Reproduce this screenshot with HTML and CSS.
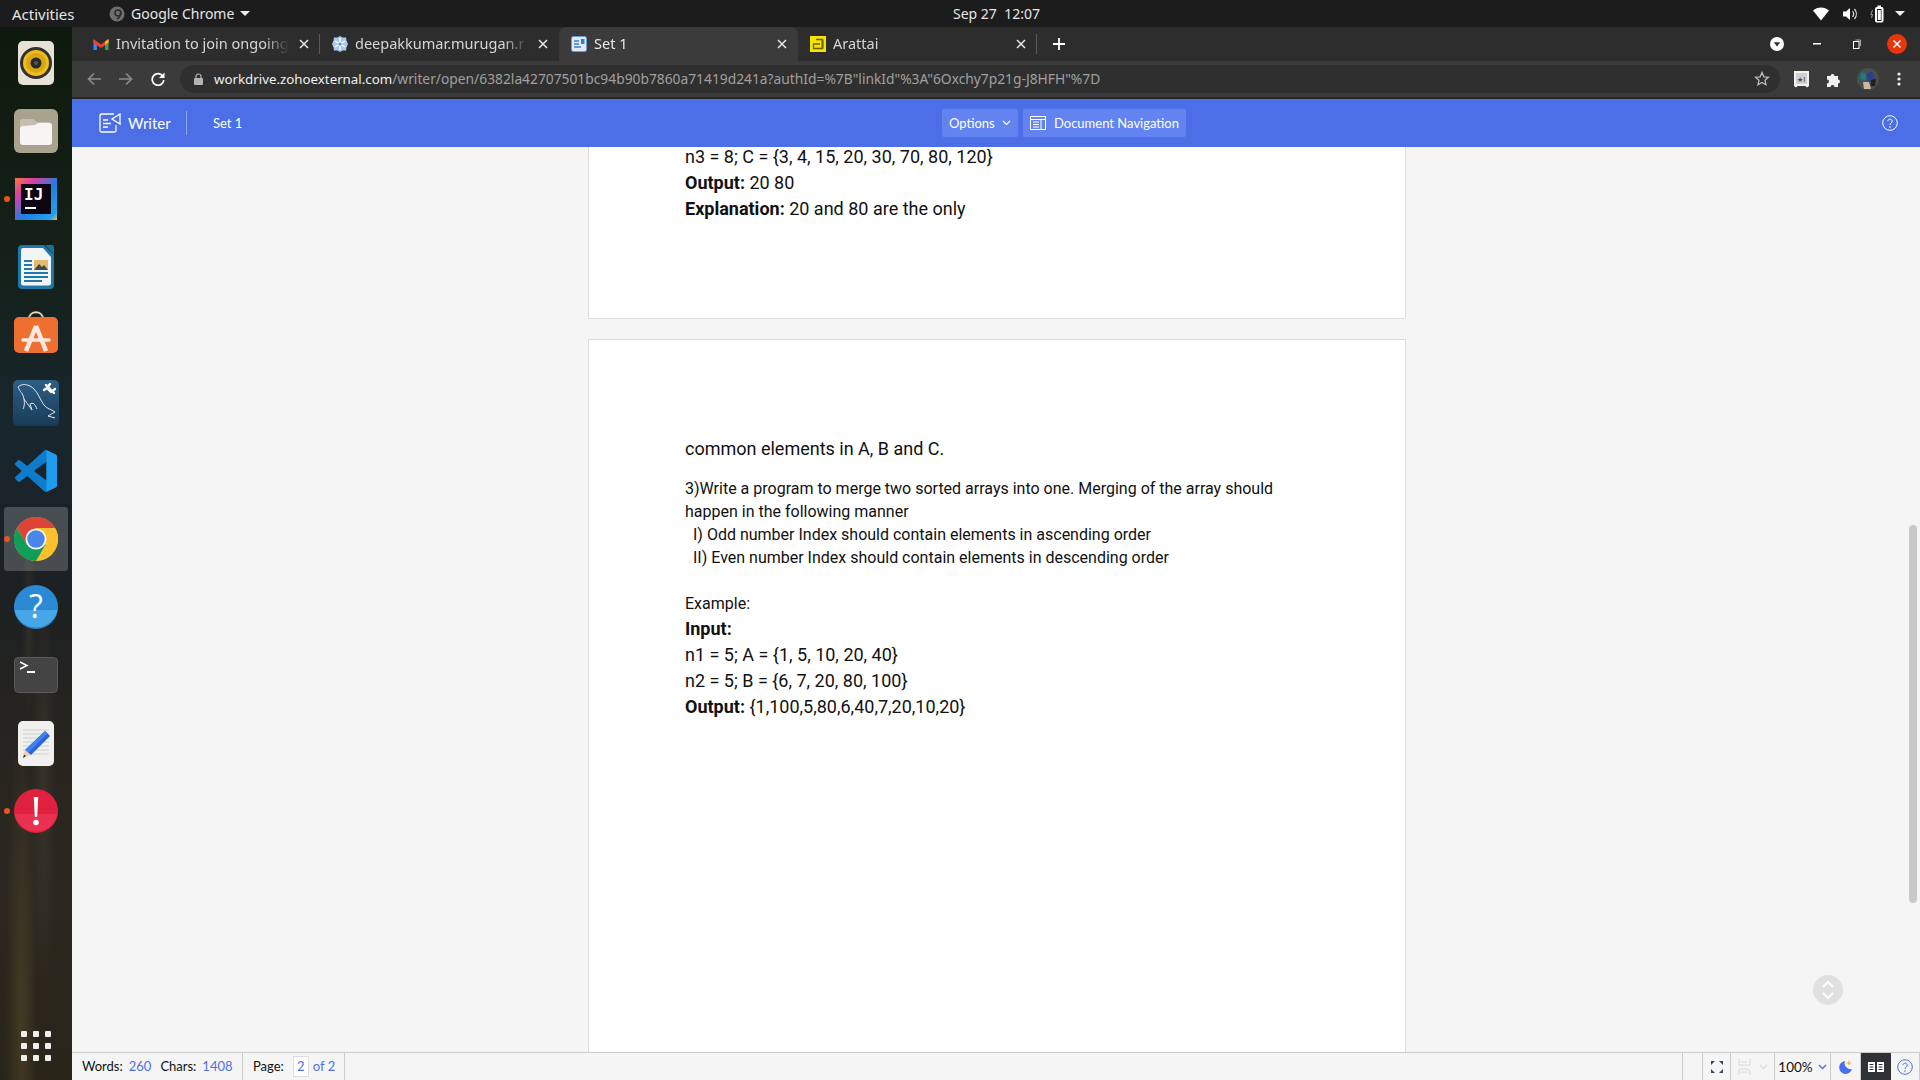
FILE: index.html
```html
<!DOCTYPE html>
<html lang="en">
  <head>
    <meta charset="UTF-8" />
    <title>Set 1</title>
    <link rel="stylesheet" href="styles.css">
  </head>
  <body>
    <!-- Desktop top bar -->
    <div class="topbar">
      <div class="topbar-left">
        <span class="activities">Activities</span>
        <svg class="app-dot" width="16" height="16" viewBox="0 0 16 16"><circle cx="8" cy="8" r="7.5" fill="#6f6f6f"/><circle cx="9" cy="7" r="3" fill="none" stroke="#2a2a2a" stroke-width="1.6"/><path d="M11.5 7c0 3-1.500 5-3.500 6" fill="none" stroke="#2a2a2a" stroke-width="1.600"/></svg>
        <span class="app-name">Google Chrome</span>
        <span class="caret"></span>
      </div>
      <span class="clock">Sep 27&nbsp; 12:07</span>
      <div class="topbar-right">
        <svg width="18" height="14" viewBox="0 0 18 14"><path d="M1 3.500C5.500-.5 12.500-.5 17 3.500L9 13.500z" fill="#fff"/></svg>
        <svg width="16" height="14" viewBox="0 0 16 14"><path d="M1 4.500h3L8 1v12L4 9.500H1z" fill="#fff"/><path d="M10.500 4c1.300 1.700 1.300 4.300 0 6M12.500 2c2.400 2.900 2.400 7.100 0 10" fill="none" stroke="#ddd" stroke-width="1.200"/></svg>
        <svg width="14" height="18" viewBox="0 0 14 18"><path d="M2.500 5 0.800 9.500H2.500L1.500 13" fill="none" stroke="#999" stroke-width="1"/><rect x="5.500" y="2.500" width="7.500" height="14.500" rx="1" fill="#fff" stroke="#fff"/><rect x="7" y="4" width="4.500" height="12" fill="#1c1c1c"/><rect x="7.800" y="5" width="3" height="10" fill="#fff"/><rect x="7.500" y="0.500" width="3.500" height="2" fill="#fff"/></svg>
        <span class="caret caret-last"></span>
      </div>
    </div>

    <div class="desktop">
      <!-- Dock -->
      <div class="dock">
        <div class="dock-item">
          <svg width="36" height="44" viewBox="0 0 36 44"><rect width="36" height="44" rx="5" fill="#e6e2d6"/><circle cx="18" cy="22" r="16" fill="#33322f"/><circle cx="18" cy="22" r="13" fill="#eebd20"/><circle cx="18" cy="22" r="10" fill="#d9a511"/><circle cx="18" cy="22" r="5.500" fill="#2a2a2a"/><circle cx="18" cy="22" r="2" fill="#555"/></svg>
        </div>
        <div class="dock-item">
          <svg width="44" height="44" viewBox="0 0 44 44"><rect width="44" height="44" rx="6" fill="#a9a28f"/><path d="M6 13a3 3 0 0 1 3-3h10l4 3h12a3 3 0 0 1 3 3v17a3 3 0 0 1-3 3H9a3 3 0 0 1-3-3z" fill="#c4bfae"/><path d="M6 19a3 3 0 0 1 3-2l12-1 3-2h11a3 3 0 0 1 3 3v17a3 3 0 0 1-3 2H9a3 3 0 0 1-3-2z" fill="#f6f5f3"/></svg>
        </div>
        <div class="dock-item">
          <span class="running-dot"></span>
          <svg width="42" height="42" viewBox="0 0 42 42"><defs><linearGradient id="ij" x1="0" y1="0" x2="1" y2="1"><stop offset="0" stop-color="#f5793a"/><stop offset="0.250" stop-color="#d93ea6"/><stop offset="0.550" stop-color="#1f7fe0"/><stop offset="0.900" stop-color="#1fa3f0"/><stop offset="1" stop-color="#f2c14a"/></linearGradient></defs><rect width="42" height="42" fill="url(#ij)"/><rect x="6" y="6" width="30" height="30" fill="#0c0612"/><text x="9" y="22" class="ij-text">IJ</text><rect x="10" y="29" width="11" height="2" fill="#fff"/></svg>
        </div>
        <div class="dock-item">
          <svg width="36" height="44" viewBox="0 0 36 44"><path d="M4 0h22l10 10v30a4 4 0 0 1-4 4H4a4 4 0 0 1-4-4V4a4 4 0 0 1 4-4z" fill="#1f78a8"/><path d="M5 3h20l8 9v26a2.500 2.500 0 0 1-2.500 2.500h-25A2.500 2.500 0 0 1 3 38V5a2 2 0 0 1 2-2z" fill="#f1f5f7"/><path d="M27 0h7a2 2 0 0 1 2 2v8z" fill="#1f6d99"/><rect x="6" y="15" width="8" height="2" fill="#1f78a8"/><rect x="6" y="19" width="8" height="2" fill="#1f78a8"/><rect x="6" y="23" width="8" height="2" fill="#1f78a8"/><rect x="16" y="15" width="14" height="10" fill="#e4b96a"/><path d="M16 25l5-6 3 3 2-2 4 5z" fill="#3f4a55"/><rect x="6" y="27" width="24" height="2" fill="#1f78a8"/><rect x="6" y="31" width="24" height="2" fill="#1f78a8"/><rect x="6" y="35" width="18" height="2" fill="#1f78a8"/></svg>
        </div>
        <div class="dock-item">
          <svg class="store-icon" width="44" height="44" viewBox="0 0 44 44"><path d="M15 9c0-9 14-9 14 0" fill="none" stroke="#e8d9b0" stroke-width="1.800"/><rect y="7" width="44" height="36" rx="5" fill="#ee7030"/><path d="M22 16 12 41M22 16l10 25" fill="none" stroke="#fbe9df" stroke-width="4.500" stroke-linejoin="round"/><path d="M9 30h26" stroke="#fbe9df" stroke-width="3.500" stroke-linecap="round"/></svg>
        </div>
        <div class="dock-item">
          <svg width="46" height="46" viewBox="0 0 46 46"><defs><linearGradient id="my" x1="0" y1="0" x2="0" y2="1"><stop offset="0" stop-color="#2f5f86"/><stop offset="1" stop-color="#183b57"/></linearGradient></defs><rect width="46" height="46" rx="5" fill="url(#my)"/><path d="M5 7C9 3 16 4 21 9c5 5 6 11 10 16 3 4 7 4 11 7l-7 4 7 2M5 7c2 5 5 6 6 12 1 5 0 8-1 10M11 19l8 11-2-6c3-2 5 0 7 5" fill="none" stroke="#dfe7ee" stroke-width="1"/><path d="M33 5l8 8M37 4l-3 4 4 4 4-3M34 8l-3 2" fill="none" stroke="#fff" stroke-width="2.400" stroke-linecap="round"/></svg>
        </div>
        <div class="dock-item">
          <svg width="42" height="42" viewBox="0 0 24 24"><path d="M23.150 2.587L18.210.21a1.494 1.494 0 0 0-1.705.29l-9.460 8.630-4.120-3.128a.999.999 0 0 0-1.276.057L.327 7.261A1 1 0 0 0 .326 8.740L3.899 12 .326 15.260a1 1 0 0 0 .001 1.479L1.650 17.940a.999.999 0 0 0 1.276.057l4.120-3.128 9.460 8.630a1.492 1.492 0 0 0 1.704.29l4.942-2.377A1.500 1.500 0 0 0 24 20.060V3.939a1.500 1.500 0 0 0-.850-1.352zm-5.146 14.861L10.826 12l7.178-5.448v10.896z" fill="#0f7ccb"/><path d="M18 0.100l5.150 2.487A1.500 1.500 0 0 1 24 3.939V20.060a1.500 1.500 0 0 1-.850 1.352L18 23.900z" fill="#1f9cf0"/></svg>
        </div>
        <div class="dock-item dock-item-active">
          <span class="running-dot"></span>
          <svg width="44" height="44" viewBox="0 0 48 48"><circle cx="24" cy="24" r="24" fill="#fbc02d"/><path id="chrome-red" d="M44.800 12A24 24 0 0 0 3.200 12L13.600 30 24 12z" fill="#db4437"/><path d="M44.800 12A24 24 0 0 1 24 48L34.400 30 24 12z" fill="#fbc02d"/><path d="M3.200 12A24 24 0 0 0 24 48L34.400 30H13.600z" fill="#0f9d58"/><circle cx="24" cy="24" r="11.500" fill="#f3f3f3"/><circle cx="24" cy="24" r="9.500" fill="#4a86e8"/></svg>
        </div>
        <div class="dock-item">
          <svg width="44" height="44" viewBox="0 0 44 44"><circle cx="22" cy="22" r="22" fill="#2b8ad6"/><path d="M0.500 25h43A22 22 0 0 1 .5 25z" fill="#48a5e6"/><text x="22" y="33" class="help-text">?</text></svg>
        </div>
        <div class="dock-item">
          <svg width="44" height="36" viewBox="0 0 44 36"><rect x="0.500" y="0.500" width="43" height="35" rx="4" fill="#444" stroke="#5c5c5c"/><path d="M6 5l7 3.500-7 3.500" fill="none" stroke="#fff" stroke-width="1.500"/><rect x="13" y="14" width="8" height="2" fill="#fff"/></svg>
        </div>
        <div class="dock-item">
          <svg width="36" height="45" viewBox="0 0 36 45"><rect width="36" height="45" rx="5" fill="#f0f0ef"/><path d="M5 9h26M5 13h26M5 17h26M5 21h26M5 25h26M5 29h26M5 33h26" stroke="#cfcfcf" stroke-width="1"/><path d="M27 10l5 5-19 19-6-5z" fill="#2a62d8"/><path d="M27 10l2.500 2.500L10 32l-3-3z" fill="#3f82ee"/><path d="M7 29l6 5-8 3z" fill="#efcfa6"/><path d="M6 33.500l2 1.500-3 2z" fill="#333"/></svg>
        </div>
        <div class="dock-item">
          <span class="running-dot"></span>
          <svg width="44" height="44" viewBox="0 0 44 44"><circle cx="22" cy="22" r="22" fill="#e0203f"/><path d="M0.500 25h43A22 22 0 0 1 .5 25z" fill="#ea3152"/><path d="M19.800 8h4.400l-1 20h-2.400z" fill="#fff"/><circle cx="22" cy="33.500" r="2.800" fill="#fff"/></svg>
        </div>
        <div class="apps-grid">
          <span></span><span></span><span></span>
          <span></span><span></span><span></span>
          <span></span><span></span><span></span>
        </div>
      </div>

      <!-- Browser window -->
      <div class="window">
        <div class="tabstrip">
          <div class="tab tab-sep">
            <svg class="favicon" width="15" height="12" viewBox="0 0 15 12"><path d="M0 1.500V12h3.400V4.500z" fill="#4285f4"/><path d="M15 1.500V12h-3.400V4.500z" fill="#34a853"/><path d="M0 1l7.500 5.500L15 1v4L7.500 10 0 5z" fill="#ea4335"/><path d="M11.600 3.500L15 1v3.500l-3.400 2.500z" fill="#fbbc04"/></svg>
            <span class="tab-title">Invitation to join ongoing</span>
            <svg class="tab-close" width="10" height="10" viewBox="0 0 10 10"><path d="M1 1l8 8M9 1L1 9" stroke="#e8e8e8" stroke-width="1.500"/></svg>
          </div>
          <div class="tab">
            <svg class="favicon" width="16" height="16" viewBox="0 0 16 16"><path d="M8 0l2.500 1.500H14l.5 3L16 8l-1.500 3.500-.5 3h-3.500L8 16l-2.500-1.500H2l-.5-3L0 8l1.500-3.500L2 1.500h3.500z" fill="#a9c8ee"/><path d="M8 2v12M3 5l10 6M13 5L3 11" stroke="#fff" stroke-width="1.300"/><circle cx="8" cy="8" r="1.600" fill="#5a93d8"/></svg>
            <span class="tab-title">deepakkumar.murugan.r</span>
            <svg class="tab-close" width="10" height="10" viewBox="0 0 10 10"><path d="M1 1l8 8M9 1L1 9" stroke="#e8e8e8" stroke-width="1.500"/></svg>
          </div>
          <div class="tab tab-active">
            <svg class="favicon" width="16" height="16" viewBox="0 0 16 16"><rect x="0.500" y="0.500" width="15" height="15" rx="2" fill="#dfe9f7" stroke="#6b9ed8"/><path d="M3 5h5M3 8h5M3 11h7" stroke="#3f7cc8" stroke-width="1.400"/><path d="M10 3h3.500v5H10z" fill="#3f7cc8"/></svg>
            <span class="tab-title">Set 1</span>
            <svg class="tab-close" width="10" height="10" viewBox="0 0 10 10"><path d="M1 1l8 8M9 1L1 9" stroke="#e8e8e8" stroke-width="1.500"/></svg>
          </div>
          <div class="tab tab-sep">
            <svg class="favicon" width="16" height="16" viewBox="0 0 16 16"><rect width="16" height="16" fill="#f5e300"/><path d="M6 3.500h6.500v9H3.500V8H10" fill="none" stroke="#6b6500" stroke-width="1.300"/><path d="M12.500 3.500v9" stroke="#6b6500" stroke-width="2"/></svg>
            <span class="tab-title">Arattai</span>
            <svg class="tab-close" width="10" height="10" viewBox="0 0 10 10"><path d="M1 1l8 8M9 1L1 9" stroke="#e8e8e8" stroke-width="1.500"/></svg>
          </div>
          <svg class="new-tab" width="14" height="14" viewBox="0 0 14 14"><path d="M7 1v12M1 7h12" stroke="#fff" stroke-width="1.800"/></svg>
          <div class="window-controls">
            <svg class="tab-search" width="14" height="14" viewBox="0 0 14 14"><circle cx="7" cy="7" r="7" fill="#fff"/><path d="M3.800 5.200h6.400L7 9.600z" fill="#2d2d2d"/></svg>
            <svg class="win-min" width="8" height="2" viewBox="0 0 8 2"><rect width="8" height="1.500" fill="#fff"/></svg>
            <svg class="win-max" width="8" height="10" viewBox="0 0 8 10"><rect x="0.500" y="2.500" width="5.500" height="7" fill="none" stroke="#fff"/><path d="M2.500 1h5v6" fill="none" stroke="#aaa"/></svg>
            <svg class="win-close" width="20" height="20" viewBox="0 0 20 20"><circle cx="10" cy="10" r="10" fill="#e8350d"/><path d="M6.500 6.500l7 7M13.500 6.500l-7 7" stroke="#fff" stroke-width="1.500"/></svg>
          </div>
        </div>

        <div class="toolbar">
          <svg class="nav-btn" width="14" height="14" viewBox="0 0 14 14"><path d="M14 7H2M7 1.500 1.500 7 7 12.500" fill="none" stroke="#8a8a8a" stroke-width="1.700"/></svg>
          <svg class="nav-btn" width="14" height="14" viewBox="0 0 14 14"><path d="M0 7h12M7 1.500 12.500 7 7 12.500" fill="none" stroke="#8a8a8a" stroke-width="1.700"/></svg>
          <svg class="nav-btn" width="14" height="14" viewBox="0 0 14 14"><path d="M12 4.500A5.800 5.800 0 1 0 12.800 8" fill="none" stroke="#fff" stroke-width="1.700"/><path d="M13.500 0.500v5.500H8z" fill="#fff"/></svg>
          <div class="omnibox">
            <svg width="9" height="12" viewBox="0 0 9 12"><path d="M2 5V3.500a2.500 2.500 0 0 1 5 0V5" fill="none" stroke="#b5b5b5" stroke-width="1.200"/><rect y="5" width="9" height="7" rx="1" fill="#b5b5b5"/></svg>
            <span class="url"><span class="url-host">workdrive.zohoexternal.com</span>/writer/open/6382la42707501bc94b90b7860a71419d241a?authId=%7B"linkId"%3A"6Oxchy7p21g-J8HFH"%7D</span>
            <svg class="star" width="16" height="16" viewBox="0 0 16 16"><path d="M8 1.500l1.900 4.300 4.600.4-3.500 3 1 4.500L8 11.400l-4 2.300 1-4.500-3.500-3 4.600-.4z" fill="none" stroke="#bdbdbd" stroke-width="1.300"/></svg>
          </div>
          <div class="toolbar-icons">
            <svg width="17" height="18" viewBox="0 0 17 18"><path d="M1 1h15v15l-2 1.500-1.500-1.500h-8L3 17.500 1 16z" fill="#f1f1f1"/><rect x="3" y="3" width="11" height="11" fill="#cfcfcf"/><text x="4" y="12" class="ext-text">★I</text></svg>
            <svg class="ext-puzzle" width="16" height="16" viewBox="0 0 16 16"><path d="M1 5h3.500a2 2 0 1 1 4 0H12v3.500a2 2 0 1 1 0 4V16H8.500a2 2 0 1 0-4 0H1v-3.500a2 2 0 1 0 0-4z" fill="#f1f1f1"/></svg>
            <svg width="22" height="22" viewBox="0 0 22 22"><circle cx="11" cy="11" r="11" fill="#47504f"/><path d="M4 4l6 2-2 7-5-2z" fill="#1b7c79"/><path d="M9 6l6-3 3 8-6 3z" fill="#2b3f86"/><path d="M6 14l6 0 2 7-7 0z" fill="#c9b8a2"/><path d="M14 12l5-1-1 7-4 0z" fill="#231c20"/></svg>
            <svg class="menu-dots" width="4" height="14" viewBox="0 0 4 14"><circle cx="2" cy="2" r="1.600" fill="#f1f1f1"/><circle cx="2" cy="7" r="1.600" fill="#f1f1f1"/><circle cx="2" cy="12" r="1.600" fill="#f1f1f1"/></svg>
          </div>
        </div>

        <!-- Writer app header -->
        <div class="app-header">
          <div class="brand">
            <svg width="22" height="20" viewBox="0 0 22 20"><path d="M15 1H2.500A1.500 1.500 0 0 0 1 2.500v15A1.500 1.500 0 0 0 2.500 19h13a1.500 1.500 0 0 0 1.500-1.500V12M4 7h5M4 10.500h8M4 14h5" fill="none" stroke="#fff" stroke-width="1.300"/><path d="M21 1v10l-8-5z" fill="none" stroke="#fff" stroke-width="1.300"/></svg>
            <span class="brand-name">Writer</span>
          </div>
          <span class="doc-name">Set 1</span>
          <div class="header-tools">
            <button class="head-btn head-options">Options
              <svg width="9" height="6" viewBox="0 0 9 6"><path d="M1 1l3.500 3.500L8 1" fill="none" stroke="#fff" stroke-width="1.200"/></svg>
            </button>
            <button class="head-btn head-nav">
              <svg width="16" height="14" viewBox="0 0 16 14"><rect x="0.500" y="0.500" width="15" height="13" fill="none" stroke="#fff"/><path d="M0.500 3.500h15M11 3.500v10M3 6h6M3 8.500h6M3 11h6" fill="none" stroke="#fff"/></svg>
              Document Navigation
            </button>
          </div>
          <svg class="head-help" width="16" height="16" viewBox="0 0 16 16"><circle cx="8" cy="8" r="7.300" fill="none" stroke="#fff"/><path d="M5.800 6.200C6 3.600 10 3.600 10.200 6c.1 1.900-2.200 1.900-2.200 4" fill="none" stroke="#fff"/><circle cx="8" cy="12" r=".8" fill="#fff"/></svg>
        </div>

        <!-- Document -->
        <div class="doc-area">
          <div class="page page-first">
            <p class="line-lg">n3 = 8; C = {3, 4, 15, 20, 30, 70, 80, 120}</p>
            <p class="line-lg"><b>Output:</b> 20 80</p>
            <p class="line-lg"><b>Explanation:</b> 20 and 80 are the only</p>
          </div>
          <div class="page page-second">
            <p class="line-lg">common elements in A, B and C.</p>
            <p class="line-sm line-gap">3)Write a program to merge two sorted arrays into one. Merging of the array should</p>
            <p class="line-sm">happen in the following manner</p>
            <p class="line-sm indent">I) Odd number Index should contain elements in ascending order</p>
            <p class="line-sm indent">II) Even number Index should contain elements in descending order</p>
            <p class="line-sm">&nbsp;</p>
            <p class="line-sm example">Example:</p>
            <p class="line-lg"><b>Input:</b></p>
            <p class="line-lg">n1 = 5; A = {1, 5, 10, 20, 40}</p>
            <p class="line-lg">n2 = 5; B = {6, 7, 20, 80, 100}</p>
            <p class="line-lg"><b>Output:</b> {1,100,5,80,6,40,7,20,10,20}</p>
          </div>
          <div class="scrollbar"></div>
          <div class="scroll-jump">
            <svg width="14" height="20" viewBox="0 0 14 20"><path d="M2 7l5-5 5 5M2 13l5 5 5-5" fill="none" stroke="#fff" stroke-width="2"/></svg>
          </div>
        </div>

        <!-- Status bar -->
        <div class="statusbar">
          <div class="status-cell status-counts">
            <span>Words:</span><span class="num">260</span>
            <span class="chars">Chars:</span><span class="num">1408</span>
          </div>
          <div class="status-cell status-page">
            <span>Page:</span><span class="page-input">2</span><span class="num">of 2</span>
          </div>
          <div class="status-right">
            <div class="status-cell cell-blank"></div>
            <div class="status-cell cell-icon cell-full">
              <svg width="12" height="12" viewBox="0 0 12 12"><path d="M0 0h4L0 4zM12 0v4L8 0zM0 12V8l4 4zM12 12H8l4-4z" fill="#33465c"/></svg>
            </div>
            <div class="status-cell cell-icon cell-layout">
              <svg width="13" height="16" viewBox="0 0 13 16"><path d="M1 0v6h11V0M1 16v-6h8l3 2v4M3 3h6M3 13h6" fill="none" stroke="#d4d9dd"/></svg>
              <svg width="9" height="6" viewBox="0 0 9 6"><path d="M1 1l3.500 3.500L8 1" fill="none" stroke="#dcdcdc" stroke-width="1.300"/></svg>
            </div>
            <div class="status-cell cell-icon cell-zoom">
              <span>100%</span>
              <svg width="9" height="6" viewBox="0 0 9 6"><path d="M1 1l3.500 3.500L8 1" fill="none" stroke="#4c6fe8" stroke-width="1.400"/></svg>
            </div>
            <div class="status-cell cell-icon cell-moon">
              <svg width="14" height="14" viewBox="0 0 14 14"><path d="M6 1A6.500 6.500 0 1 0 13 9 6 6 0 0 1 6 1z" fill="#4c6fe8"/><path d="M10 0l.8 2.200L13 3l-2.200.8L10 6l-.8-2.200L7 3l2.200-.8z" fill="#f4b63d"/></svg>
            </div>
            <div class="status-cell cell-icon cell-read">
              <svg width="16" height="12" viewBox="0 0 16 12"><path d="M0 1h7v10H0zM9 1h7v10H9z" fill="#fff"/><path d="M1.500 3.500h4M1.500 6h4M1.500 8.500h4M10.500 3.500h4M10.500 6h4M10.500 8.500h4" stroke="#2f3336"/></svg>
            </div>
            <div class="status-cell cell-icon cell-help">
              <svg width="16" height="16" viewBox="0 0 16 16"><circle cx="8" cy="8" r="7.300" fill="none" stroke="#4c6fe8"/><path d="M5.800 6.200C6 3.600 10 3.600 10.200 6c.1 1.900-2.200 1.900-2.200 4" fill="none" stroke="#4c6fe8"/><circle cx="8" cy="12" r=".8" fill="#4c6fe8"/></svg>
            </div>
          </div>
        </div>
      </div>
    </div>
  </body>
</html>
```

FILE: styles.css
```css
* {
  box-sizing: border-box;
}
html,
body {
  margin: 0;
  padding: 0;
  height: 100%;
  overflow: hidden;
}
body {
  display: flex;
  flex-direction: column;
  width: 1920px;
  height: 1080px;
  font-family: "Noto Sans", sans-serif;
  background-color: #1c1c1c;
}
svg {
  display: block;
  flex-shrink: 0;
}

/* Top bar */
.topbar {
  display: flex;
  align-items: center;
  height: 27px;
  background-color: #1c1c1c;
  color: #e6e6e6;
  font-size: 14px;
  flex-shrink: 0;
}
.topbar-left {
  display: flex;
  align-items: center;
  width: 953px;
  padding-left: 12px;
}
.activities {
  width: 97px;
  font-size: 15px;
}
.app-name {
  margin-left: 6px;
}
.caret {
  width: 0;
  height: 0;
  margin-left: 6px;
  border-left: 5px solid transparent;
  border-right: 5px solid transparent;
  border-top: 5px solid #eee;
}
.clock {
  font-size: 14px;
}
.topbar-right {
  display: flex;
  align-items: center;
  gap: 12px;
  margin-left: auto;
  padding-right: 15px;
}
.caret-last {
  margin-left: -1px;
}

/* Dock */
.desktop {
  display: flex;
  flex: 1;
  min-height: 0;
}
.dock {
  display: flex;
  flex-direction: column;
  width: 72px;
  padding-top: 2px;
  background:
    radial-gradient(ellipse at 30% 94%, rgba(110, 95, 50, 0.35), transparent 22%),
    radial-gradient(ellipse at 60% 72%, rgba(90, 80, 65, 0.3), transparent 20%),
    radial-gradient(ellipse at 40% 56%, rgba(120, 110, 80, 0.18), transparent 12%),
    linear-gradient(180deg, #0e1a0d 0%, #142016 20%, #18262e 38%, #1b2023 52%, #26241f 66%, #2c2820 82%, #2a2519 100%);
  flex-shrink: 0;
}
.dock-item {
  position: relative;
  display: flex;
  align-items: center;
  justify-content: center;
  height: 68px;
}
.dock-item-active::before {
  content: "";
  position: absolute;
  top: 2px;
  left: 4px;
  width: 64px;
  height: 64px;
  border-radius: 3px;
  background-color: rgba(255, 255, 255, 0.2);
}
.dock-item svg {
  position: relative;
}
.dock-item .store-icon {
  margin-top: -6px;
}
.running-dot {
  position: absolute;
  left: 4px;
  top: 31px;
  width: 6px;
  height: 6px;
  border-radius: 50%;
  background-color: #e95420;
  z-index: 1;
}
.ij-text {
  font-family: "DejaVu Sans Mono", monospace;
  font-weight: bold;
  font-size: 16px;
  fill: #fff;
}
.help-text {
  font-family: "Open Sans", sans-serif;
  font-size: 32px;
  fill: #fff;
  text-anchor: middle;
}
.apps-grid {
  display: grid;
  grid-template-columns: repeat(3, 6px);
  gap: 6px;
  margin-top: auto;
  margin-bottom: 19px;
  margin-left: 21px;
}
.apps-grid span {
  width: 6px;
  height: 6px;
  border-radius: 1px;
  background-color: #eee;
}

/* Browser */
.window {
  display: flex;
  flex-direction: column;
  flex: 1;
  min-width: 0;
}
.tabstrip {
  display: flex;
  align-items: stretch;
  height: 34px;
  padding-left: 9px;
  background-color: #2d2d2d;
  flex-shrink: 0;
}
.tab {
  position: relative;
  display: flex;
  align-items: center;
  width: 239px;
  padding: 0 11px 0 12px;
  color: #d6d6d6;
  font-size: 14.500px;
}
.tab-sep::after {
  content: "";
  position: absolute;
  right: 0;
  top: 7px;
  bottom: 7px;
  width: 1px;
  background-color: #5a5a5a;
}
.tab-active {
  background-color: #3b3b3b;
  border-radius: 8px 8px 0 0;
  color: #e8e8e8;
}
.favicon {
  width: 16px;
}
.tab-title {
  flex: 1;
  margin-left: 7px;
  padding-bottom: 2px;
  overflow: hidden;
  white-space: nowrap;
  -webkit-mask-image: linear-gradient(90deg, #000 86%, transparent 100%);
  mask-image: linear-gradient(90deg, #000 86%, transparent 100%);
}
.tab-close {
  margin-left: 10px;
}
.new-tab {
  align-self: center;
  margin-left: 15px;
}
.window-controls {
  display: flex;
  align-items: center;
  margin-left: auto;
}
.tab-search {
  margin-right: 29px;
}
.win-min {
  margin-right: 32px;
}
.win-max {
  margin-right: 26px;
}
.win-close {
  margin-right: 13px;
}
.toolbar {
  display: flex;
  align-items: center;
  height: 38px;
  padding-left: 15px;
  background-color: #3b3b3b;
  border-bottom: 2px solid #262626;
  flex-shrink: 0;
}
.nav-btn {
  margin-right: 18px;
}
.omnibox {
  display: flex;
  align-items: center;
  width: 1600px;
  height: 28px;
  margin-left: -3px;
  padding: 0 10px 0 14px;
  background-color: #2f2f2f;
  border-radius: 14px;
}
.url {
  margin-left: 11px;
  padding-bottom: 2px;
  color: #a0a0a0;
  font-size: 13.800px;
  white-space: nowrap;
}
.url-host {
  color: #f0f0f0;
  font-size: 13.300px;
}
.star {
  margin-left: auto;
}
.toolbar-icons {
  display: flex;
  align-items: center;
  gap: 15px;
  margin-left: 13px;
}
.ext-puzzle {
  margin-left: 1px;
}
.menu-dots {
  margin-left: 3px;
}
.ext-text {
  font-family: "DejaVu Sans", sans-serif;
  font-size: 7px;
  fill: #444;
}

/* App header */
.app-header {
  display: flex;
  align-items: center;
  height: 48px;
  padding-left: 27px;
  background-color: #4c6fe8;
  color: #fff;
  font-family: Lato, sans-serif;
  flex-shrink: 0;
}
.brand {
  display: flex;
  align-items: center;
  width: 88px;
  height: 24px;
  border-right: 1px solid #8ea5f1;
}
.brand-name {
  margin-left: 7px;
  font-size: 15px;
}
.doc-name {
  width: 755px;
  padding-left: 26px;
  font-size: 13px;
}
.header-tools {
  display: flex;
  gap: 5px;
}
.head-btn {
  display: flex;
  align-items: center;
  height: 28px;
  padding: 0 7px;
  border: none;
  border-radius: 2px;
  background-color: #6384f0;
  color: #fff;
  font-family: Lato, sans-serif;
  font-size: 13px;
}
.head-options {
  width: 76px;
  gap: 7px;
}
.head-nav {
  width: 163px;
  gap: 8px;
}
.head-help {
  margin-left: auto;
  margin-right: 22px;
}

/* Document */
.doc-area {
  position: relative;
  flex: 1;
  min-height: 0;
  overflow: hidden;
  background-color: #f5f5f5;
  color: #111;
  font-family: Roboto, sans-serif;
}
.page {
  width: 818px;
  margin-left: 516px;
  padding-left: 96px;
  background-color: #fff;
  border: 1px solid #ddd;
}
.page p {
  margin: 0;
  white-space: nowrap;
}
.page-first {
  height: 175px;
  border-top: none;
  padding-top: 0;
  margin-bottom: 20px;
  margin-top: -3px;
}
.page-second {
  height: 900px;
  padding-top: 96px;
}
.line-lg {
  font-size: 18px;
  line-height: 26px;
}
.line-sm {
  font-size: 16px;
  line-height: 23px;
}
.line-gap {
  margin-top: 15px !important;
}
.example {
  margin-bottom: 1px !important;
}
.indent {
  padding-left: 8px;
}
.scrollbar {
  position: absolute;
  top: 378px;
  right: 3px;
  width: 8px;
  height: 378px;
  border-radius: 4px;
  background-color: #c8c8c8;
}
.scroll-jump {
  position: absolute;
  top: 828px;
  left: 1741px;
  display: flex;
  align-items: center;
  justify-content: center;
  width: 30px;
  height: 30px;
  border-radius: 50%;
  background-color: #e0e0e0;
}

/* Status bar */
.statusbar {
  display: flex;
  height: 28px;
  padding-bottom: 0;
  background-color: #f5f5f5;
  border-top: 1px solid #ccc;
  color: #111;
  font-family: Lato, sans-serif;
  font-size: 13px;
  flex-shrink: 0;
}
.status-cell {
  display: flex;
  align-items: center;
  height: 100%;
  border-right: 1px solid #ccc;
}
.status-counts {
  width: 171px;
  padding-left: 10px;
  padding-bottom: 1px;
}
.num {
  margin-left: 6px;
  color: #4c6fe8;
}
.chars {
  margin-left: 9px;
}
.status-page {
  width: 102px;
  padding-left: 10px;
  padding-bottom: 1px;
}
.page-input {
  width: 16px;
  height: 21px;
  margin-left: 9px;
  border: 1px solid #ddd;
  background-color: #fff;
  color: #4c6fe8;
  line-height: 19px;
  text-align: center;
}
.status-page .num {
  margin-left: 4px;
}
.status-right {
  display: flex;
  margin-left: auto;
}
.cell-icon {
  justify-content: center;
}
.cell-blank {
  width: 21px;
  border-left: 1px solid #ccc;
}
.cell-full {
  width: 28px;
}
.cell-layout {
  width: 44px;
  gap: 8px;
}
.cell-zoom {
  width: 56px;
  gap: 5px;
  font-size: 13.500px;
}
.cell-moon {
  width: 30px;
}
.cell-read {
  width: 30px;
  background-color: #2f3336;
  border-right: none;
}
.cell-help {
  width: 29px;
}
```
